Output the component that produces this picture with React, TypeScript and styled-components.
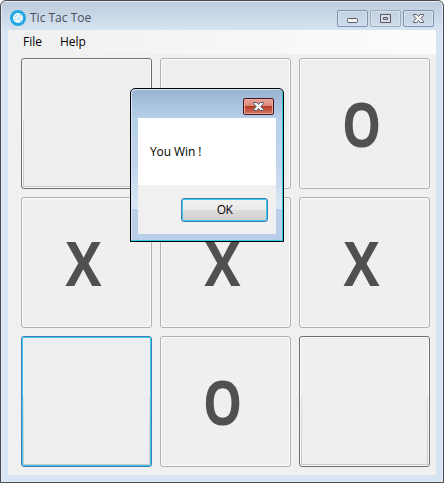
import React from "react";
import styled, { createGlobalStyle } from "styled-components";

const Global = createGlobalStyle`
  * { box-sizing: border-box; }
  body { margin: 0; background: #fff; font-family: "Open Sans", "Noto Sans", sans-serif; font-size: 12px; color: #000; }
  button { font: inherit; color: inherit; padding: 0; margin: 0; }
`;

const Window = styled.main`
  position: relative;
  width: 444px;
  height: 483px;
  overflow: hidden;
  display: flex;
  flex-direction: column;
  padding: 0 7px 7px;
  border: 1px solid #4a494d;
  border-radius: 6px 6px 0 0;
  background: linear-gradient(#bccbdc 0, #d7e4f2 30px);
  box-shadow: inset 0 0 0 1px #e3edf7;
`;

const TitleBar = styled.header`
  height: 29px;
  display: flex;
  align-items: center;
  padding: 5px 2px 0 2px;
`;

const Title = styled.h1`
  flex: 1;
  margin: 0 0 0 4px;
  font-size: 12px;
  font-weight: 400;
  line-height: 16px;
  color: #4b4d5b;
`;

const Controls = styled.div`
  display: flex;
  gap: 2px;
`;

const Control = styled.button<{ $muted?: boolean }>`
  width: 31px;
  height: 17px;
  display: flex;
  border: 1px solid ${(p) => (p.$muted ? "#a0acba" : "#8190ad")};
  border-radius: 2px;
  background: linear-gradient(#c4d1e0, #cedbea);
  box-shadow: inset 0 0 0 1px #d6e2ee;
`;

const Client = styled.div`
  flex: 1;
  display: flex;
  flex-direction: column;
  background: #f0f0f0;
`;

const MenuBar = styled.nav`
  height: 24px;
  display: flex;
  align-items: center;
  gap: 18px;
  padding-left: 15px;
  background: linear-gradient(90deg, #f0f0f0, #fcfcfc);
`;

const MenuItem = styled.span`
  line-height: 16px;
`;

const Board = styled.section`
  display: grid;
  grid-template: repeat(3, 131px) / repeat(3, 131px);
  gap: 8px;
  padding: 4px 0 0 13px;
`;

type CellKind = "played" | "open" | "focused";

const edge = { played: "#adb2b5", open: "#707070", focused: "#3c7fb1" };
const inner = { played: "#fafafa", open: "#fafafa", focused: "#39c9f5" };

const Cell = styled.button<{ $kind: CellKind }>`
  display: flex;
  padding: 1px;
  border: 1px solid ${(p) => edge[p.$kind]};
  border-radius: 3px;
  background: #efefef;
  box-shadow: inset 0 0 0 1px ${(p) => inner[p.$kind]};
`;

const Shade = styled.span`
  flex: 1;
  align-self: stretch;
  margin-top: 59px;
  border: solid #cfcfcf;
  border-width: 0 1px 1px;
  border-image: linear-gradient(#dedede, #c9c9c9) 1;
`;

const Mark = styled.span<{ $o: boolean }>`
  flex: 1;
  align-self: center;
  font: 700 60px/82px "Open Sans", sans-serif;
  color: #505050;
  transform: translate(-3px, 0) scaleX(${(p) => (p.$o ? 0.82 : 0.9)});
`;

const Dialog = styled.section`
  position: absolute;
  left: 129px;
  top: 87px;
  width: 154px;
  height: 154px;
  display: flex;
  flex-direction: column;
  padding: 0 7px 7px;
  border: 1px solid #000;
  border-radius: 5px 5px 0 0;
  background: linear-gradient(#98b2d0 0, #b7cfe9 29px, #c1d5ed 77px, #dae7f5 120px, #b9cfe9 120px);
  box-shadow: inset -1px -1px 0 #35cbe4, inset 1px 1px 0 #d5e4f2;
`;

const DialogBar = styled.header`
  height: 29px;
  display: flex;
  justify-content: flex-end;
  padding: 9px 2px 0 0;
`;

const DialogClose = styled.button`
  width: 31px;
  height: 17px;
  display: flex;
  border: 1px solid #4b1722;
  border-radius: 2px;
  background: linear-gradient(#e8a79b 0, #d98678 7px, #b93620 7px, #d47b64);
  box-shadow: inset 0 0 0 1px #e6a697;
`;

const Message = styled.p`
  height: 67px;
  margin: 0;
  padding-left: 12px;
  background: #fff;
  letter-spacing: -0.1px;
  line-height: 67px;
`;

const DialogFooter = styled.footer`
  flex: 1;
  display: flex;
  justify-content: flex-end;
  padding: 13px 8px 12px 0;
  background: #f0f0f0;
`;

const OkButton = styled.button`
  width: 87px;
  height: 24px;
  border: 1px solid #3c7fb1;
  border-radius: 3px;
  background: linear-gradient(#f2f2f2 0, #ebebeb 50%, #dddddd 50%, #cfcfcf);
  box-shadow: inset 0 0 0 1px #39c9f0;
  line-height: 22px;
  letter-spacing: -0.5px;
`;

const AppIcon = () => (
  <svg width="16" height="16" viewBox="0 0 16 16">
    <circle cx="8" cy="8" r="8" fill="#25a7df" />
    <circle cx="8" cy="8" r="5" fill="#e9f7fc" />
    <path d="M5 7l2-2M7 10l3-3M10 11l1-1M5 9l1 1M9 5h2" stroke="#7bc8e6" strokeWidth=".9" fill="none" />
  </svg>
);

const MinimizeIcon = () => (
  <svg width="29" height="15">
    <rect x="9.5" y="7.5" width="10" height="4" rx="1" fill="#f4f4f4" stroke="#555969" />
  </svg>
);

const MaximizeIcon = () => (
  <svg width="29" height="15">
    <path d="M9.5 3.5h10v8h-10z" fill="#dedee2" stroke="#555969" />
    <path d="M12.5 6.5h4v2h-4z" fill="#c8d5e4" stroke="#555969" />
  </svg>
);

const CloseIcon = () => (
  <svg width="29" height="15">
    <path
      d="M9.5 3.5h3.2l1.8 2 1.8-2h3.2v1.2l-2.7 2.8 2.7 2.8v1.2h-3.2l-1.8-2-1.8 2H9.5v-1.2l2.7-2.8-2.7-2.8z"
      fill="#f5f5f5"
      stroke="#555969"
    />
  </svg>
);

const cells: { mark?: "X" | "O"; kind: CellKind }[] = [
  { kind: "open" },
  { kind: "played" },
  { mark: "O", kind: "played" },
  { mark: "X", kind: "played" },
  { mark: "X", kind: "played" },
  { mark: "X", kind: "played" },
  { kind: "focused" },
  { mark: "O", kind: "played" },
  { kind: "open" },
];

export default function App() {
  return (
    <>
      <Global />
      <Window>
        <TitleBar>
          <AppIcon />
          <Title>Tic Tac Toe</Title>
          <Controls>
            <Control aria-label="Minimize"><MinimizeIcon /></Control>
            <Control aria-label="Maximize" $muted><MaximizeIcon /></Control>
            <Control aria-label="Close"><CloseIcon /></Control>
          </Controls>
        </TitleBar>
        <Client>
          <MenuBar>
            <MenuItem>File</MenuItem>
            <MenuItem>Help</MenuItem>
          </MenuBar>
          <Board>
            {cells.map(({ mark, kind }, i) => (
              <Cell key={i} $kind={kind}>
                {mark && <Mark $o={mark === "O"}>{mark}</Mark>}
                {kind !== "played" && <Shade />}
              </Cell>
            ))}
          </Board>
        </Client>
        <Dialog role="dialog">
          <DialogBar>
            <DialogClose aria-label="Close"><CloseIcon /></DialogClose>
          </DialogBar>
          <Message>You Win !</Message>
          <DialogFooter>
            <OkButton>OK</OkButton>
          </DialogFooter>
        </Dialog>
      </Window>
    </>
  );
}
